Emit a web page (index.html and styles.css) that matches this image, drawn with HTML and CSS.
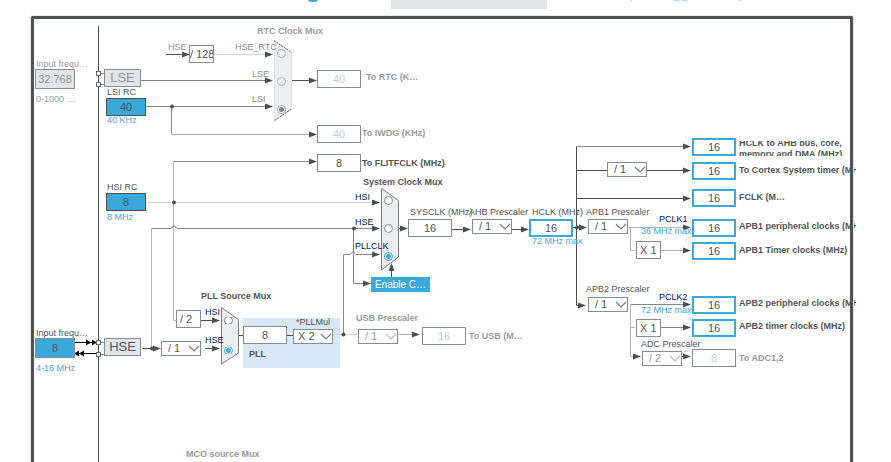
FILE: index.html
```html
<!DOCTYPE html>
<html lang="en">
<head>
<meta charset="utf-8">
<title>Clock Configuration</title>
<link rel="stylesheet" href="styles.css">
</head>
<body>
<div class="workspace">
<header class="toolbar">
  <svg class="toolbar-marks" width="891" height="16" aria-hidden="true">
    <path d="M308.500 0Q313 2 317.500 0" fill="none" stroke="#39a9dc" stroke-width="2"/>
    <path d="M631 0l1 1M740 0l-1 1M674 0q2.500 1 5 0M682 0q2.500 1 5 0" fill="none" stroke="#a8dbf3" stroke-width="1.500"/>
    <rect x="391" y="0" width="156" height="9" fill="#e1e5e8"/>
  </svg>
</header>
<main class="frame"></main>
<div class="sheet">
  <svg class="wires" width="891" height="462" aria-hidden="true">
    <defs>
      <path id="head" d="M0 0L-8 -3V3Z"/>
      <path id="chev" d="M-5 -3L0 2L5 -3" fill="none" stroke-width="1.200"/>
    </defs>
    <rect x="243" y="318" width="97" height="50" fill="#d8e8f6"/>
    <rect x="293" y="329" width="40" height="15" fill="#fff"/>
    <g fill="none" stroke="#4b4f50">
      <path d="M98.500 26V462M166 54.500H184M291 80.500H310M399 228.500H404M452 229.500H466M512 229.500H523M573 227.500H581"/>
      <path d="M576.500 305.500V146.500M576.500 305.500H580M576.500 170.500H607M647 170.500H686M576.500 198.500H686"/>
      <path d="M142 348.500H156M201 320.500H214M205 348.500H214M239 335.500H243M287 335.500H293M391.500 277V270M682 356.500H686"/>
    </g>
    <g fill="none" stroke="#858889">
      <path d="M141 80.500H268M146 106.500H268M171.500 106V134M173.500 161.500H312M576 146.500H686M151.500 228.500H171M177 228.500H374M353.500 228V283.500H364M343.500 334V254.500H350M356 254.500H374M630 304.500H686M661 327.500H686M101 73.500H104M101 84.500H104M101 342.500H104M101 354.500H104"/>
    </g>
    <g fill="none" stroke="#b3b5b6">
      <path d="M171.500 134.500H312M173.500 161V320.500H176M151.500 348V228M661 250.500H686M628 227.500H686M630.500 227V250.500H635M630.500 304V356.500H634M630 327.500H635M398 334.500H414"/>
    </g>
    <path d="M214 54.500H268M147 202.500H374M335 334.500H357" fill="none" stroke="#d2d4d5"/>
    <path d="M171 228.500L174 225.500L177 228.500M350 254.500L353 251.500L356 254.500" fill="none" stroke="#6a7073"/>
    <g fill="#4b4f50">
      <use href="#head" x="190" y="54.500"/><use href="#head" x="273" y="54.500"/><use href="#head" x="273" y="80.500"/><use href="#head" x="273" y="106.500"/>
      <use href="#head" x="317" y="80.500"/><use href="#head" x="317" y="134.500"/><use href="#head" x="317" y="161.500"/>
      <use href="#head" x="380" y="202.500"/><use href="#head" x="380" y="228.500"/><use href="#head" x="380" y="254.500"/><use href="#head" x="371" y="283.500"/>
      <use href="#head" x="408" y="228.500"/><use href="#head" x="471" y="229.500"/><use href="#head" x="529" y="229.500"/><use href="#head" x="587" y="227.500"/>
      <use href="#head" x="691" y="146.500"/><use href="#head" x="691" y="170.500"/><use href="#head" x="691" y="198.500"/><use href="#head" x="691" y="227.500"/><use href="#head" x="691" y="250.500"/>
      <use href="#head" x="586" y="305.500"/><use href="#head" x="691" y="304.500"/><use href="#head" x="691" y="327.500"/><use href="#head" x="641" y="356.500"/><use href="#head" x="691" y="356.500"/>
      <use href="#head" x="161" y="348.500"/><use href="#head" x="220" y="320.500"/><use href="#head" x="220" y="348.500"/><use href="#head" x="420" y="334.500"/>
      <path d="M391.500 263L388.500 271H394.500Z"/>
      <circle cx="172" cy="106.500" r="2"/><circle cx="174" cy="202.500" r="2"/><circle cx="354" cy="228.500" r="2"/><circle cx="577" cy="227.500" r="2"/><circle cx="152" cy="348.500" r="2"/><circle cx="343.500" cy="334.500" r="2"/>
    </g>
    <g stroke="#000" fill="#000">
      <path d="M75 342.500H96M96 353.500H76" fill="none"/>
      <path d="M86 339.500L91 342.500L86 345.500ZM92 339.500L97 342.500L92 345.500ZM79 350.500L74 353.500L79 356.500ZM84 350.500L79 353.500L84 356.500Z" stroke="none"/>
    </g>
    <g fill="#fff" stroke="#6a6d6e">
      <rect x="96.500" y="71.500" width="4" height="4"/><rect x="96.500" y="82.500" width="4" height="4"/><rect x="96.500" y="340.500" width="4" height="4"/><rect x="96.500" y="352.500" width="4" height="4"/>
    </g>
    <path d="M274.500 40.500L291.500 52.500V109L274.500 121Z" fill="#e9eef1" stroke="#dde1e4"/>
    <path d="M274 40.500L291.500 52.500M291.500 109L274 121" fill="none" stroke="#6a7073" stroke-dasharray="2 1"/>
    <g fill="#e9eef1" stroke="#777d80">
      <path d="M381.500 188.500L398.500 200.500V257L381.500 270Z"/>
      <path d="M221.500 307.500L238.500 319.500V353L221.500 364Z"/>
    </g>
    <g stroke="#777d80">
      <use href="#chev" x="505" y="227"/><use href="#chev" x="621" y="227"/><use href="#chev" x="640" y="170"/><use href="#chev" x="621" y="305"/><use href="#chev" x="194" y="349"/><use href="#chev" x="326" y="337"/>
    </g>
    <g stroke="#b5b8ba"><use href="#chev" x="391" y="337"/><use href="#chev" x="675" y="359"/></g>
  </svg>

  <!-- low-speed sources and RTC -->
  <label id="l-lse-in" class="text" for="lse-in" data-tone="off">Input frequ…</label>
  <input id="lse-in" class="box grey" value="32.768">
  <span id="l-lse-range" class="text" data-tone="off">0-1000 …</span>
  <button id="lse" class="osc" data-tone="off">LSE</button>
  <label id="l-lsi" class="text" for="lsi">LSI RC</label>
  <input id="lsi" class="box source" value="40" readonly>
  <span id="l-lsi-u" class="text" data-tone="blue">40 KHz</span>
  <label id="l-rtc-hse" class="text" for="rtc-div" data-tone="mid">HSE</label>
  <input id="rtc-div" class="box factor" value="/ 128" readonly>
  <b id="l-rtc-mux" class="text" data-tone="off">RTC Clock Mux</b>
  <label id="l-hse-rtc" class="text" for="r-rtc1" data-tone="mid">HSE_RTC</label>
  <label id="l-rtc-lse" class="text" for="r-rtc2" data-tone="mid">LSE</label>
  <label id="l-rtc-lsi" class="text" for="r-rtc3" data-tone="mid">LSI</label>
  <input id="r-rtc1" class="pick off" type="radio" name="rtc">
  <input id="r-rtc2" class="pick off" type="radio" name="rtc">
  <input id="r-rtc3" class="pick off" type="radio" name="rtc" checked>
  <input id="rtc" class="box idle" value="40" readonly>
  <label id="l-rtc" class="text strong" for="rtc" data-tone="off">To RTC (K…</label>
  <input id="iwdg" class="box idle" value="40" readonly>
  <label id="l-iwdg" class="text strong" for="iwdg" data-tone="off">To IWDG (KHz)</label>
  <input id="flitf" class="box" value="8" readonly>
  <label id="l-flitf" class="text strong" for="flitf">To FLITFCLK (MHz)</label>

  <!-- internal and external high-speed sources -->
  <label id="l-hsi" class="text" for="hsi">HSI RC</label>
  <input id="hsi" class="box source" value="8" readonly>
  <span id="l-hsi-u" class="text" data-tone="blue">8 MHz</span>
  <label id="l-hse-in" class="text" for="hse-in">Input frequ…</label>
  <input id="hse-in" class="box blue-in" value="8">
  <span id="l-hse-range" class="text" data-tone="blue">4-16 MHz</span>
  <button id="hse" class="osc">HSE</button>

  <!-- PLL -->
  <b id="l-pll-mux" class="text">PLL Source Mux</b>
  <input id="hsi-div" class="box factor" value="/ 2" aria-label="HSI divider" readonly>
  <select id="hse-div" class="drop" aria-label="HSE divider"><option>/ 1</option></select>
  <label id="l-pll-hsi" class="text" for="r-pll1" data-tone="navy">HSI</label>
  <label id="l-pll-hse" class="text" for="r-pll2" data-tone="navy">HSE</label>
  <input id="r-pll1" class="pick cut" type="radio" name="pll">
  <input id="r-pll2" class="pick cut" type="radio" name="pll" checked>
  <input id="pll" class="box" value="8" readonly>
  <label id="l-pll" class="text strong" for="pll">PLL</label>
  <label id="l-mul" class="text" for="mul">*PLLMul</label>
  <select id="mul" class="drop times"><option>X 2</option></select>
  <label id="l-usb-div" class="text strong" for="usb-div" data-tone="off">USB Prescaler</label>
  <select id="usb-div" class="drop off"><option>/ 1</option></select>
  <input id="usb" class="box idle" value="16" readonly>
  <label id="l-usb" class="text strong" for="usb" data-tone="off">To USB (M…</label>
  <b id="l-mco" class="text" data-tone="off">MCO source Mux</b>

  <!-- system clock -->
  <b id="l-sys-mux" class="text">System Clock Mux</b>
  <input id="r-sys1" class="pick" type="radio" name="sys">
  <input id="r-sys2" class="pick" type="radio" name="sys">
  <input id="r-sys3" class="pick" type="radio" name="sys" checked>
  <label id="l-sys-hsi" class="text" for="r-sys1" data-tone="navy">HSI</label>
  <label id="l-sys-hse" class="text" for="r-sys2" data-tone="navy">HSE</label>
  <label id="l-sys-pll" class="text" for="r-sys3" data-tone="navy">PLLCLK</label>
  <button id="css">Enable C…</button>
  <label id="l-sysclk" class="text" for="sysclk">SYSCLK (MHz)</label>
  <input id="sysclk" class="box" value="16" readonly>
  <label id="l-ahb" class="text" for="ahb">AHB Prescaler</label>
  <select id="ahb" class="drop"><option>/ 1</option></select>
  <label id="l-hclk" class="text" for="hclk">HCLK (MHz)</label>
  <input id="hclk" class="box live" value="16">
  <span id="l-hclk-max" class="text" data-tone="blue">72 MHz max</span>

  <!-- bus clocks -->
  <input id="bus" class="box live out" value="16">
  <label id="l-bus" class="text strong dest" for="bus">HCLK to AHB bus, core, memory and DMA (MHz)</label>
  <select id="cortex-div" class="drop" aria-label="Cortex prescaler"><option>/ 1</option></select>
  <input id="cortex" class="box live out" value="16">
  <label id="l-cortex" class="text strong dest" for="cortex">To Cortex System timer (MHz)</label>
  <input id="fclk" class="box live out" value="16">
  <label id="l-fclk" class="text strong dest" for="fclk">FCLK (M…</label>
  <label id="l-apb1" class="text" for="apb1">APB1 Prescaler</label>
  <select id="apb1" class="drop"><option>/ 1</option></select>
  <span id="l-pclk1" class="text" data-tone="navy">PCLK1</span>
  <span id="l-apb1-max" class="text" data-tone="blue">36 MHz max</span>
  <input id="apb1-p" class="box live out" value="16">
  <label id="l-apb1-p" class="text strong dest" for="apb1-p">APB1 peripheral clocks (MHz)</label>
  <input id="apb1-x" class="box factor" value="X 1" aria-label="APB1 timer multiplier" readonly>
  <input id="apb1-t" class="box live out" value="16">
  <label id="l-apb1-t" class="text strong dest" for="apb1-t">APB1 Timer clocks (MHz)</label>
  <label id="l-apb2" class="text" for="apb2">APB2 Prescaler</label>
  <select id="apb2" class="drop"><option>/ 1</option></select>
  <span id="l-pclk2" class="text" data-tone="navy">PCLK2</span>
  <span id="l-apb2-max" class="text" data-tone="blue">72 MHz max</span>
  <input id="apb2-p" class="box live out" value="16">
  <label id="l-apb2-p" class="text strong dest" for="apb2-p">APB2 peripheral clocks (MHz)</label>
  <input id="apb2-x" class="box factor" value="X 1" aria-label="APB2 timer multiplier" readonly>
  <input id="apb2-t" class="box live out" value="16">
  <label id="l-apb2-t" class="text strong dest" for="apb2-t">APB2 timer clocks (MHz)</label>
  <label id="l-adc-div" class="text" for="adc-div">ADC Prescaler</label>
  <select id="adc-div" class="drop off"><option>/ 2</option></select>
  <input id="adc" class="box idle out" value="8" readonly>
  <label id="l-adc" class="text strong dest" for="adc" data-tone="off">To ADC1,2</label>
</div>
</div>
</body>
</html>
```
FILE: styles.css
```css
* { box-sizing: border-box; }

body {
  margin: 0;
  background: #fff;
  color: #525557;
  font-family: "Liberation Sans", Arial, sans-serif;
  font-size: 9px;
}

.workspace {
  position: relative;
  display: flex;
  flex-direction: column;
  min-height: 100vh;
  overflow: hidden;
}

.toolbar { height: 16px; overflow: hidden; }
.toolbar-marks { display: block; }

.frame {
  flex: 1;
  margin: 0 38px 0 31px;
  border: 3px solid #505354;
  border-bottom: 0;
  border-radius: 2px 2px 0 0;
  box-shadow: 0 0 0 1px #e4e7e9;
  z-index: 2;
  pointer-events: none;
}

/* Free canvas that carries the clock tree nodes */
.sheet { position: absolute; inset: 0; }
.sheet > * { position: absolute; margin: 0; }
.wires { left: 0; top: 0; }

.text { line-height: 12px; white-space: nowrap; }
.strong { font-weight: bold; }
[data-tone="off"] { color: #999b9d; }
[data-tone="mid"] { color: #8a8d90; }
[data-tone="blue"] { color: #39a9dc; }
[data-tone="navy"] { color: #03234b; }

.box, .drop, .osc, #css {
  border: 1px solid #858c92;
  border-radius: 0;
  padding: 0;
  font-family: inherit;
  font-size: 11px;
  color: #525557;
  background: #fff;
  outline: 0;
}

.box { width: 44px; height: 18px; text-align: center; }
.box.factor { width: 25px; text-align: left; padding-left: 3px; }
.box.idle { color: #b5d2ea; }
.box.live { border: 2px solid #39a9dc; }
.box.source { width: 40px; background: #39a9dc; border-color: #4b5052; }
.box.blue-in { width: 40px; height: 20px; background: #39a9dc; }
.box.grey { width: 40px; height: 20px; background: #e1e5e8; color: #8f969c; }

.drop {
  appearance: none;
  width: 40px;
  height: 15px;
  padding-left: 6px;
  line-height: 13px;
  background: transparent;
}
.drop.times { padding-left: 4px; }
.drop.off { color: #999b9d; }

.osc { width: 37px; height: 18px; background: #e1e5e8; font-size: 13px; line-height: 16px; }
.osc[data-tone="off"] { color: #8f969c; }

#css {
  left: 371px; top: 277px;
  width: 59px; height: 15px;
  border: 0;
  background: #39a9dc;
  color: #fff;
  font-size: 10px;
}

.pick {
  appearance: none;
  width: 9px;
  height: 9px;
  border: 1px solid #84898c;
  border-radius: 50%;
  background: #fff;
}
.pick:checked { border-color: #39a9dc; background: radial-gradient(circle, #39a9dc 2px, #fff 3px); }
.pick.off { border-color: #b0b3b5; background: #f1f3f4; }
.pick.off:checked { background: radial-gradient(circle, #85898c 2px, #f1f3f4 3px); }
.pick.cut { clip-path: inset(1px 0); }

.out { left: 692px; }
.dest { left: 739px; width: 117px; overflow: hidden; }

/* Node places */
#l-lse-in { left: 36px; top: 58px; }
#lse-in { left: 35px; top: 69px; }
#l-lse-range { left: 36px; top: 93px; }
#lse { left: 104px; top: 69px; }
#l-lsi { left: 107px; top: 86px; }
#lsi { left: 106px; top: 98px; }
#l-lsi-u { left: 107px; top: 114px; }
#l-rtc-hse { left: 168px; top: 41px; }
#rtc-div { left: 189px; top: 45px; padding-left: 0; }
#l-rtc-mux { left: 257px; top: 25px; }
#l-hse-rtc { left: 235px; top: 41px; }
#l-rtc-lse { left: 252px; top: 68px; }
#l-rtc-lsi { left: 252px; top: 93px; }
#r-rtc1 { left: 277px; top: 49px; }
#r-rtc2 { left: 277px; top: 77px; }
#r-rtc3 { left: 277px; top: 105px; }
#rtc { left: 317px; top: 70px; }
#l-rtc { left: 366px; top: 71px; }
#iwdg { left: 317px; top: 125px; }
#l-iwdg { left: 362px; top: 127px; }
#flitf { left: 317px; top: 154px; }
#l-flitf { left: 362px; top: 157px; }

#l-hsi { left: 107px; top: 181px; }
#hsi { left: 106px; top: 193px; }
#l-hsi-u { left: 107px; top: 211px; }
#l-hse-in { left: 36px; top: 327px; }
#hse-in { left: 35px; top: 338px; }
#l-hse-range { left: 36px; top: 362px; }
#hse { left: 104px; top: 338px; }

#l-pll-mux { left: 201px; top: 290px; }
#hsi-div { left: 176px; top: 310px; }
#hse-div { left: 161px; top: 341px; }
#l-pll-hsi { left: 205px; top: 306px; }
#l-pll-hse { left: 205px; top: 334px; }
#r-pll1 { left: 224px; top: 316px; }
#r-pll2 { left: 224px; top: 346px; }
#pll { left: 243px; top: 326px; }
#l-pll { left: 249px; top: 348px; }
#l-mul { left: 296px; top: 316px; }
#mul { left: 293px; top: 329px; }
#l-usb-div { left: 356px; top: 312px; }
#usb-div { left: 358px; top: 329px; }
#usb { left: 422px; top: 327px; }
#l-usb { left: 469px; top: 330px; }
#l-mco { left: 186px; top: 448px; }

#l-sys-mux { left: 363px; top: 176px; }
#r-sys1 { left: 384px; top: 196px; }
#r-sys2 { left: 384px; top: 224px; }
#r-sys3 { left: 384px; top: 252px; }
#l-sys-hsi { left: 355px; top: 191px; }
#l-sys-hse { left: 355px; top: 216px; }
#l-sys-pll { left: 355px; top: 240px; }
#l-sysclk { left: 410px; top: 206px; }
#sysclk { left: 408px; top: 219px; }
#l-ahb { left: 469px; top: 206px; }
#ahb { left: 472px; top: 219px; }
#l-hclk { left: 532px; top: 206px; }
#hclk { left: 529px; top: 219px; }
#l-hclk-max { left: 532px; top: 235px; }

#bus { top: 138px; }
#l-bus { top: 141px; height: 15px; line-height: 11px; white-space: normal; text-indent: 0; display: flex; align-items: center; }
#cortex-div { left: 607px; top: 162px; }
#cortex { top: 162px; }
#l-cortex { top: 164px; }
#fclk { top: 189px; }
#l-fclk { top: 191px; }
#l-apb1 { left: 586px; top: 206px; }
#apb1 { left: 588px; top: 219px; }
#l-pclk1 { left: 659px; top: 213px; }
#l-apb1-max { left: 641px; top: 225px; }
#apb1-p { top: 219px; }
#l-apb1-p { top: 220px; }
#apb1-x { left: 636px; top: 241px; }
#apb1-t { top: 242px; }
#l-apb1-t { top: 244px; }
#l-apb2 { left: 586px; top: 283px; }
#apb2 { left: 588px; top: 297px; }
#l-pclk2 { left: 659px; top: 291px; }
#l-apb2-max { left: 641px; top: 304px; }
#apb2-p { top: 296px; }
#l-apb2-p { top: 297px; }
#apb2-x { left: 636px; top: 319px; }
#apb2-t { top: 319px; }
#l-apb2-t { top: 320px; }
#l-adc-div { left: 641px; top: 338px; }
#adc-div { left: 642px; top: 351px; }
#adc { top: 349px; }
#l-adc { top: 352px; }
```
